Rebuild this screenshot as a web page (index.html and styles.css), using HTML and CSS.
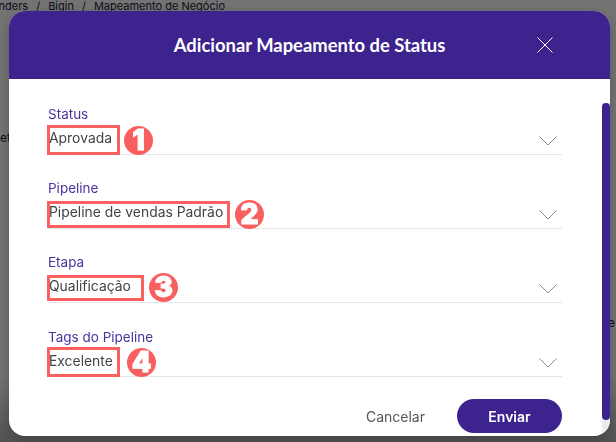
FILE: index.html
```html
<!DOCTYPE html>
<html lang="pt-br">
<head>
    <meta charset="UTF-8">
    <meta name="viewport" content="width=device-width, initial-scale=1.0">
    <title>Mapeamento de Negócio</title>
    <link rel="stylesheet" href="styles.css">
</head>
<body>
    <div class="page">
        <div class="breadcrumb">
            <span>Lenders</span>
            <span class="sep">/</span>
            <span>Bigin</span>
            <span class="sep">/</span>
            <span>Mapeamento de Negócio</span>
        </div>
        <div class="page-row">
            <span class="page-left">et</span>
            <span class="page-right">Pipeline</span>
        </div>
    </div>

    <div class="overlay">
        <div class="modal">
            <div class="modal-header">
                <h2>Adicionar Mapeamento de Status</h2>
                <button class="close" type="button" aria-label="Fechar">
                    <svg width="16" height="16" viewBox="0 0 16 16"><path d="M.5.5l15 15M15.500.5l-15 15" stroke="#fff" fill="none"/></svg>
                </button>
            </div>
            <div class="modal-body">
                <div class="scrollbar"><div class="thumb"></div></div>
                <form class="form">
                    <div class="field">
                        <label>Status</label>
                        <div class="select">
                            <span class="mark mark-1">Aprovada</span>
                            <span class="badge badge-1">1</span>
                            <svg class="chevron" width="18" height="10" viewBox="0 0 18 10"><path d="M.5.5L9 9l8.500-8.500" stroke="#8c8c8c" fill="none"/></svg>
                        </div>
                    </div>
                    <div class="field">
                        <label>Pipeline</label>
                        <div class="select">
                            <span class="mark mark-2">Pipeline de vendas Padrão</span>
                            <span class="badge badge-2">2</span>
                            <svg class="chevron" width="18" height="10" viewBox="0 0 18 10"><path d="M.5.5L9 9l8.500-8.500" stroke="#8c8c8c" fill="none"/></svg>
                        </div>
                    </div>
                    <div class="field">
                        <label>Etapa</label>
                        <div class="select">
                            <span class="mark mark-3">Qualificação</span>
                            <span class="badge badge-3">3</span>
                            <svg class="chevron" width="18" height="10" viewBox="0 0 18 10"><path d="M.5.5L9 9l8.500-8.500" stroke="#8c8c8c" fill="none"/></svg>
                        </div>
                    </div>
                    <div class="field">
                        <label class="label-tags">Tags do Pipeline</label>
                        <div class="select">
                            <span class="mark mark-4">Excelente</span>
                            <span class="badge badge-4">4</span>
                            <svg class="chevron" width="18" height="10" viewBox="0 0 18 10"><path d="M.5.5L9 9l8.500-8.500" stroke="#8c8c8c" fill="none"/></svg>
                        </div>
                    </div>
                    <div class="actions">
                        <button class="cancel" type="button">Cancelar</button>
                        <button class="submit" type="submit">Enviar</button>
                    </div>
                </form>
            </div>
        </div>
    </div>
</body>
</html>
```

FILE: styles.css
```css
* {
    box-sizing: border-box;
}

html, body {
    height: 100%;
}

body {
    margin: 0;
    font-family: 'Inter', sans-serif;
    background-color: #fff;
    color: #444;
    overflow: hidden;
}

.page {
    height: 442px;
    overflow: hidden;
    background-color: #fff;
    color: #1d1d3a;
    font-size: 11px;
}

.breadcrumb {
    display: flex;
    justify-content: flex-end;
    gap: 8px;
    width: 225px;
    height: 13px;
    line-height: 13px;
    white-space: nowrap;
}

.page-row {
    display: flex;
    justify-content: space-between;
    padding-right: 1px;
    margin-top: 117px;
    font-size: 12px;
}

.page-left {
    height: 14px;
}

.page-right {
    margin-top: 185px;
}

.overlay {
    position: fixed;
    inset: 0;
    padding: 11px 6px 6px 9px;
    background: linear-gradient(to bottom, rgba(0, 0, 0, 0.55), rgba(0, 0, 0, 0.55) 85%, rgba(0, 0, 0, 0.68));
}

.modal {
    height: 425px;
    display: flex;
    flex-direction: column;
    border-radius: 16px;
    overflow: hidden;
    background-color: #fff;
    box-shadow: 0 4px 12px rgba(0, 0, 0, 0.25);
}

.modal-header {
    flex: none;
    height: 68px;
    display: flex;
    align-items: center;
    justify-content: center;
    background-color: #3d238e;
    position: relative;
}

.modal-header h2 {
    margin: 0;
    color: #fff;
    font-family: 'Lato', sans-serif;
    font-size: 18.400px;
    font-weight: 700;
}

.close {
    position: absolute;
    top: 26px;
    right: 57px;
    padding: 0;
    display: flex;
    border: none;
    background: none;
}

.modal-body {
    flex: 1;
    position: relative;
    padding: 26px 48px 0 39px;
}

.scrollbar {
    position: absolute;
    top: 24px;
    right: 0;
    bottom: 0;
    width: 8px;
    background-color: #ececec;
}

.thumb {
    height: 317px;
    border-radius: 4px;
    background-color: #3d238e;
}

.field {
    height: 74px;
}

.field label {
    display: block;
    height: 19px;
    line-height: 19px;
    color: #4b32a0;
    font-size: 13.500px;
}

.field .label-tags {
    line-height: 21px;
}

.select {
    height: 31px;
    display: flex;
    align-items: flex-start;
    position: relative;
    border-bottom: 1px solid #e6e6e6;
}

/* caixas vermelhas: cada uma tem altura diferente na captura */
.mark {
    flex: none;
    margin-left: -1px;
    border: 3px solid #f96060;
    text-indent: -1px;
    font-size: 13.900px;
    color: #444;
    white-space: nowrap;
}

.mark-1 {
    width: 73px;
    height: 30px;
    margin-top: 1px;
    line-height: 20px;
}

.mark-2 {
    width: 183px;
    height: 27px;
    margin-top: 3px;
    line-height: 16px;
}

.mark-3 {
    width: 97px;
    height: 26px;
    margin-top: 3px;
    line-height: 16px;
}

.mark-4 {
    width: 73px;
    height: 30px;
    margin-top: 1px;
    line-height: 22px;
}

.badge {
    flex: none;
    width: 29px;
    height: 29px;
    margin-top: 2px;
    margin-left: 4px;
    border-radius: 50%;
    background-color: #fa5f5f;
    color: #fff;
    font-family: 'Inter', sans-serif;
    font-size: 28px;
    font-weight: 900;
    line-height: 29px;
    text-align: center;
    -webkit-text-stroke: 0.8px #fff;
}

.badge-2, .badge-3 {
    margin-left: 5px;
}

.badge-3 {
    margin-top: 1px;
}

.badge-4 {
    margin-left: 7px;
}

.chevron {
    position: absolute;
    right: 5px;
    top: 12px;
}

.actions {
    display: flex;
    justify-content: flex-end;
    align-items: center;
    gap: 32px;
    margin-top: -2px;
}

.cancel {
    padding: 0;
    border: none;
    background: none;
    color: #555;
    font-family: 'Inter', sans-serif;
    font-size: 14px;
}

.submit {
    width: 105px;
    height: 34px;
    border: none;
    border-radius: 17px;
    background-color: #3d238e;
    color: #fff;
    font-family: 'Inter', sans-serif;
    font-size: 14px;
    font-weight: 600;
}
```
